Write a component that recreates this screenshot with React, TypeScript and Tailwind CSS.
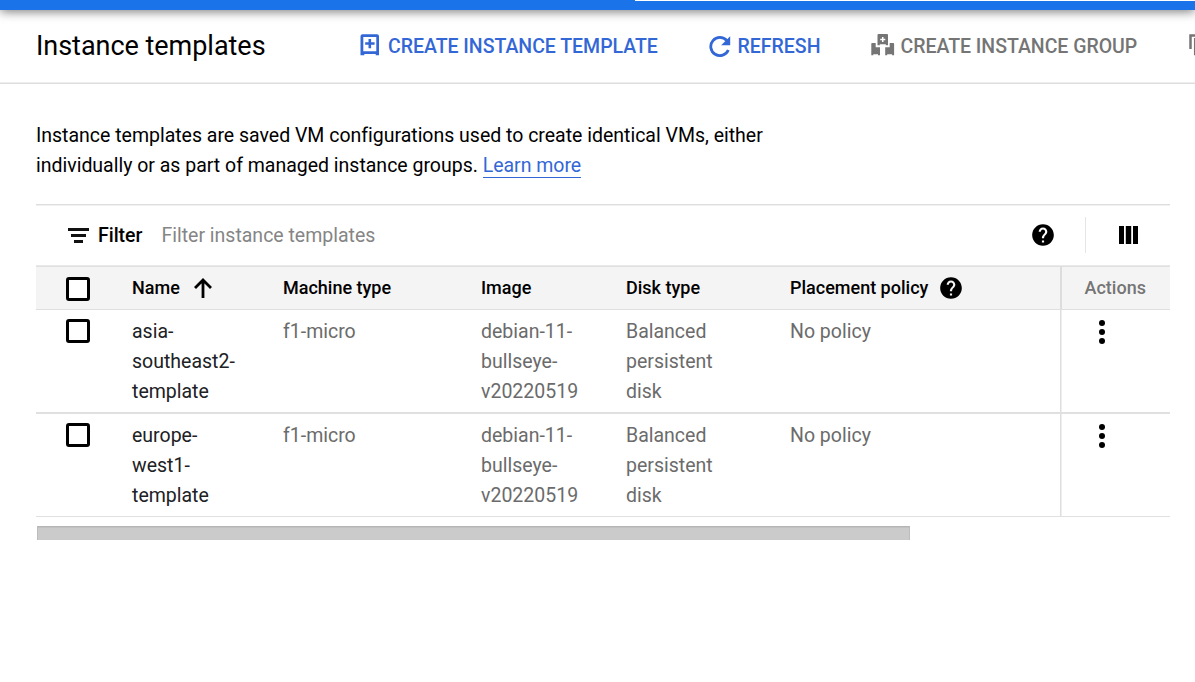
import React from "react";

const HelpIcon = () => (
  <svg className="size-[26px] shrink-0" viewBox="0 0 24 24" fill="#000">
    <path d="M12 2C6.48 2 2 6.48 2 12s4.48 10 10 10 10-4.48 10-10S17.52 2 12 2zm1 17h-2v-2h2v2zm2.07-7.75l-.9.92C13.45 12.9 13 13.5 13 15h-2v-.5c0-1.1.45-2.1 1.17-2.83l1.24-1.26c.37-.36.59-.86.59-1.41 0-1.1-.9-2-2-2s-2 .9-2 2H8c0-2.21 1.79-4 4-4s4 1.79 4 4c0 .88-.36 1.68-.93 2.25z" />
  </svg>
);

const TemplateIcon = () => (
  <svg className="mb-[3px] h-[22px] w-[20px] shrink-0" viewBox="0 0 20 22" fill="#3367d6">
    <path
      fillRule="evenodd"
      d="M2.500 0.300h14.500A2 2 0 0 1 19 2.300V21.300h-3.300v-1.300h-11.400v1.300H0.500V2.300a2 2 0 0 1 2-2zM3.300 3V17.200h13V3z"
    />
    <path d="M8.500 5h2.600v3.300h3.500v2.400h-3.500V14.300H8.500v-3.600H5.200V8.300h3.300z" />
  </svg>
);

const RefreshIcon = () => (
  <svg className="size-[22px] shrink-0" viewBox="0 0 22 22">
    <path d="M17.800 4.600A9.100 9.100 0 1 0 19.300 14" fill="none" stroke="#3367d6" strokeWidth="2.800" />
    <path d="M21.200 0.300V9.300H12.200z" fill="#3367d6" />
  </svg>
);

const GroupIcon = () => (
  <svg className="mb-[3px] h-[22px] w-[24px] shrink-0" viewBox="0 0 24 22" fill="#757575">
    <path
      fillRule="evenodd"
      d="M7.500 0h8.500a1 1 0 0 1 1 1v10.300h-2.200v-1h-6v1H6.500V1a1 1 0 0 1 1-1zM11 3v1.800H9.200v1.500H11v1.800h1.500V6.300h1.800V4.800h-1.800V3z"
    />
    <path d="M1 9h3.700v4.300H9v8H7v-1H2.300v1H0.300V10a1 1 0 0 1 .7-1zM22.500 9h-3.800v4.300h-4.500v8h2v-1h4.900v1h2V10a1 1 0 0 0-.6-1z" />
  </svg>
);

const CopyIcon = () => (
  <svg className="mb-[3px] h-[22px] w-[20px] shrink-0" viewBox="0 0 20 22" fill="none" stroke="#757575" strokeWidth="2.500">
    <path d="M1.500 15V1.500H15" />
    <path d="M6.200 5.200H18V20H6.200z" />
  </svg>
);

const Checkbox = () => (
  <span className="block size-6 rounded-[3px] border-[3px] border-black bg-white" />
);

const More = () => (
  <svg className="h-6 w-[6px]" viewBox="0 0 6 24" fill="#000">
    <circle cx="3" cy="3" r="3" />
    <circle cx="3" cy="12" r="3" />
    <circle cx="3" cy="21" r="3" />
  </svg>
);

const columns = "grid grid-cols-[96px_151px_198px_145px_164px_270px_110px]";

const rows = [
  { name: ["asia-", "southeast2-", "template"] },
  { name: ["europe-", "west1-", "template"] },
];

const Lines = ({ lines }: { lines: string[] }) => (
  <div>
    {lines.map((line) => (
      <div key={line} className="whitespace-nowrap">{line}</div>
    ))}
  </div>
);

export default function App() {
  return (
    <div className="flex h-[682px] w-full flex-col overflow-hidden bg-white font-[Roboto,sans-serif] text-[19.5px] leading-[30px] text-black">
      <div className="relative z-10 flex h-[10px] shrink-0 justify-end bg-[#1a73e8] shadow-[0_1px_11px_rgba(0,0,0,0.6)]">
        <div className="h-px w-[560px] bg-white" />
      </div>
      <header className="flex h-[74px] shrink-0 items-center border-b border-[#dedede] pl-9 font-medium shadow-[inset_0_-1px_0_#eeeeee]">
        <h1 className="w-[324px] shrink-0 pb-[2px] text-[27px] font-normal tracking-[-0.03px] whitespace-nowrap">Instance templates</h1>
        <button className="flex w-[348.500px] shrink-0 items-center gap-2 text-[#3367d6]">
          <TemplateIcon />
          <span className="tracking-[-0.02px] whitespace-nowrap">CREATE INSTANCE TEMPLATE</span>
        </button>
        <button className="flex w-[162px] shrink-0 items-center gap-[7px] text-[#3367d6]">
          <RefreshIcon />
          <span>REFRESH</span>
        </button>
        <button className="flex w-[318px] shrink-0 items-center gap-1.5 text-[#757575]">
          <GroupIcon />
          <span className="tracking-[-0.02px] whitespace-nowrap">CREATE INSTANCE GROUP</span>
        </button>
        <CopyIcon />
      </header>

      <main className="pr-[25px] pl-9">
        <p className="pt-[37px] tracking-[-0.01px]">
          <span className="block whitespace-nowrap">Instance templates are saved VM configurations used to create identical VMs, either</span>
          <span className="block h-[30px] whitespace-nowrap">
            individually or as part of managed instance groups.{" "}
            <a className="inline-block h-[27px] border-b border-[#3367d6] text-[#3367d6]">Learn more</a>
          </span>
        </p>

        <section className="mt-[23px] border-t border-[#dedede]">
          <div className="flex h-[60px] items-center border-t border-[#f0f0f0] pl-8">
            <svg className="h-[15px] w-[21px]" viewBox="0 0 21 15" fill="#111">
              <path d="M0 0h21v3H0zM3 6h15v3H3zM6 12h9v3H6z" />
            </svg>
            <span className="ml-[9px] w-[63.500px] font-medium tracking-[-0.04px]">Filter</span>
            <span className="flex-1 tracking-[-0.01px] text-[#858585]">Filter instance templates</span>
            <div className="-mr-[0.500px] flex pb-[2px]"><HelpIcon /></div>
            <div className="mb-[2px] ml-[30px] h-9 w-px bg-[#e5e5e5]" />
            <svg className="mr-8 mb-[2px] ml-[33px] h-[18px] w-[19px]" viewBox="0 0 19 18">
              <path d="M0 0h5v18H0zM6.800 0h5.400v18H6.800zM14 0h5v18h-5z" fill="#000" />
            </svg>
          </div>

          <div className={columns + " h-[45px] items-center border-y border-t-[#e9e9e9] border-b-[#dfdfdf] bg-[#f4f4f4] text-[18px] font-medium shadow-[inset_0_1px_0_#e0e0e0]"}>
            <div className="pt-0.5 pl-[30px]"><Checkbox /></div>
            <div className="flex items-center gap-[14.500px]">
              Name
              <svg className="h-5 w-[18px]" viewBox="0 0 18 20" fill="none" stroke="#000" strokeWidth="2.800">
                <path d="M9 20V2M1 10L9 2l8 8" />
              </svg>
            </div>
            <div>Machine type</div>
            <div>Image</div>
            <div>Disk type</div>
            <div className="flex items-center gap-[10px] whitespace-nowrap">
              Placement policy
              <div className="flex"><HelpIcon /></div>
            </div>
            <div className="flex h-full items-center border-l-2 border-[#dddddd] pl-[22.500px] text-[#757575]">Actions</div>
          </div>

          {rows.map((row, i) => (
            <div key={i} className={columns + " border-b-2 border-[#e0e0e0] text-[#6b6b6b] last:border-b"}>
              <div className="pt-[9px] pl-[30px]"><Checkbox /></div>
              <div className="pt-[7px] pb-[5px] text-[#202124]"><Lines lines={row.name} /></div>
              <div className="pt-[7px] pb-[5px]">f1-micro</div>
              <div className="pt-[7px] pb-[5px]"><Lines lines={["debian-11-", "bullseye-", "v20220519"]} /></div>
              <div className="pt-[7px] pb-[5px]"><Lines lines={["Balanced", "persistent", "disk"]} /></div>
              <div className="pt-[7px] pb-[5px]">No policy</div>
              <div className="border-l border-[#dedede] pt-[10px] pl-[38px] shadow-[inset_1px_0_0_#eeeeee]"><More /></div>
            </div>
          ))}
        </section>
        <div className="mt-[9px] ml-px h-[14px] w-[873px] border-x border-t border-x-[#bdbdbd] border-t-[#b5b5b5] bg-[#cbcbcb] shadow-[inset_0_1px_0_#c1c1c1]" />
      </main>
    </div>
  );
}
